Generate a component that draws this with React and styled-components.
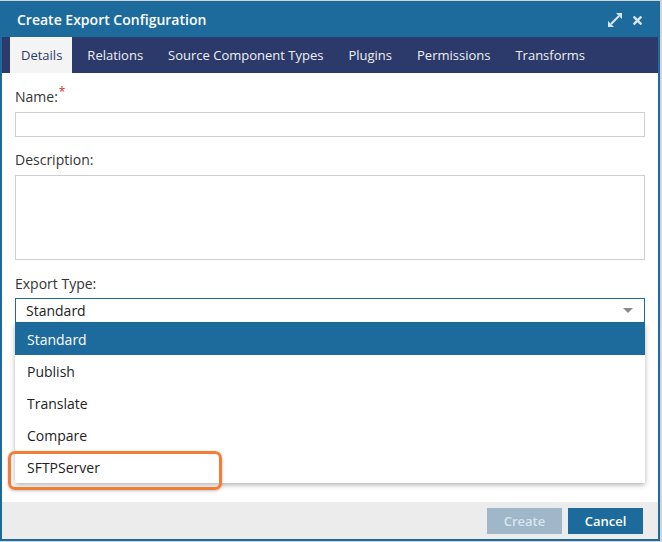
import React from 'react';
import styled, { createGlobalStyle } from 'styled-components';
import { FaTimes } from 'react-icons/fa';

const GlobalStyle = createGlobalStyle`
  body {
    margin: 0;
    background: #d4d4d4;
    font-family: "Open Sans", "DejaVu Sans", sans-serif;
  }
`;

const Dialog = styled.div`
  width: 656px;
  height: 538px;
  margin-top: 1px;
  border: 2px solid #1c6b9c;
  border-top: none;
  background: #fff;
  display: flex;
  flex-direction: column;
`;

const TitleBar = styled.div`
  height: 36px;
  background: #1c6b9c;
  display: flex;
  align-items: center;
  justify-content: space-between;
  padding: 0 14px 0 15px;
  color: #fff;
`;

const Title = styled.h1`
  margin: 0;
  font-size: 14px;
  font-weight: 600;
`;

const WindowButtons = styled.div`
  display: flex;
  align-items: center;
  gap: 8px;
  color: #d6e4ee;
  padding-top: 2px;
`;

const TabBar = styled.div`
  height: 36px;
  background: #2b3a6a;
  display: flex;
  padding-left: 8px;
`;

const Tab = styled.div`
  display: flex;
  align-items: center;
  padding: 0 10px 0 11px;
  margin-right: 4px;
  font-size: 13px;
  color: ${p => (p.$active ? '#2b3a6a' : '#eef0f5')};
  background: ${p => (p.$active ? '#f4f4f4' : 'transparent')};
`;

const Body = styled.div`
  flex: 1;
  padding: 14px 13px 0;
  display: flex;
  flex-direction: column;
`;

const Label = styled.label`
  display: block;
  font-size: 14px;
  line-height: 20px;
  color: #333;
  margin-bottom: ${p => p.$gap || 5}px;
`;

const Required = styled.sup`
  color: #d9272e;
  font-size: 12px;
  line-height: 0;
  margin-left: 1px;
`;

const Input = styled.div`
  height: 23px;
  border: 1px solid #cfcfcf;
  margin-bottom: 13px;
`;

const TextArea = styled.div`
  height: 83px;
  border: 1px solid #cfcfcf;
  margin-bottom: 14px;
`;

const SelectWrap = styled.div`
  position: relative;
`;

const Select = styled.div`
  height: 23px;
  border: 1px solid #1c6b9c;
  display: flex;
  align-items: center;
  justify-content: space-between;
  padding: 0 11px 0 10px;
  font-size: 14px;
  color: #222;
`;

const Caret = styled.span`
  width: 0;
  height: 0;
  border-left: 5px solid transparent;
  border-right: 5px solid transparent;
  border-top: 5px solid #8a8a8a;
`;

const Menu = styled.ul`
  position: absolute;
  top: 100%;
  left: 0;
  right: 0;
  margin: 0;
  padding: 0;
  list-style: none;
  background: #fff;
  box-shadow: 0 2px 5px rgba(0, 0, 0, 0.3);
  z-index: 2;
`;

const Option = styled.li`
  position: relative;
  height: 32px;
  display: flex;
  align-items: center;
  padding-left: 12px;
  font-size: 14px;
  color: ${p => (p.$selected ? '#fff' : '#222')};
  background: ${p => (p.$selected ? '#1c6b9c' : 'transparent')};
`;

const Highlight = styled.span`
  position: absolute;
  left: -7px;
  top: 0;
  width: 208px;
  height: 33px;
  border: 3px solid #f47c34;
  border-radius: 7px;
  box-shadow: 0 1px 3px rgba(0, 0, 0, 0.25);
`;

const Footer = styled.div`
  height: 37px;
  background: #ececec;
  display: flex;
  align-items: center;
  justify-content: flex-end;
  gap: 6px;
  padding-right: 15px;
`;

const Button = styled.button`
  width: 75px;
  height: 26px;
  border: none;
  font-family: inherit;
  font-size: 13px;
  font-weight: 600;
  color: ${p => (p.disabled ? '#dbe5ec' : '#fff')};
  background: ${p => (p.disabled ? '#9fb7c8' : '#1c6b9c')};
`;

const ExpandIcon = () => (
  <svg width="16" height="16" viewBox="0 0 16 16">
    <path d="M9 1h6v6z M1 9v6h6z" fill="currentColor" />
    <path d="M4 12L12 4" stroke="currentColor" strokeWidth="2.2" />
  </svg>
);

const tabs = ['Details', 'Relations', 'Source Component Types', 'Plugins', 'Permissions', 'Transforms'];
const types = ['Standard', 'Publish', 'Translate', 'Compare', 'SFTPServer'];

export default function App() {
  return (
    <>
      <GlobalStyle />
      <Dialog>
        <TitleBar>
          <Title>Create Export Configuration</Title>
          <WindowButtons>
            <ExpandIcon />
            <FaTimes size={13} />
          </WindowButtons>
        </TitleBar>
        <TabBar>
          {tabs.map((t, i) => (
            <Tab key={t} $active={i === 0}>{t}</Tab>
          ))}
        </TabBar>
        <Body>
          <Label $gap={5}>Name:<Required>*</Required></Label>
          <Input />
          <Label>Description:</Label>
          <TextArea />
          <Label $gap={4}>Export Type:</Label>
          <SelectWrap>
            <Select>
              Standard
              <Caret />
            </Select>
            <Menu>
              {types.map((t, i) => (
                <Option key={t} $selected={i === 0}>
                  {t}
                  {t === 'SFTPServer' && <Highlight />}
                </Option>
              ))}
            </Menu>
          </SelectWrap>
        </Body>
        <Footer>
          <Button disabled>Create</Button>
          <Button>Cancel</Button>
        </Footer>
      </Dialog>
    </>
  );
}
